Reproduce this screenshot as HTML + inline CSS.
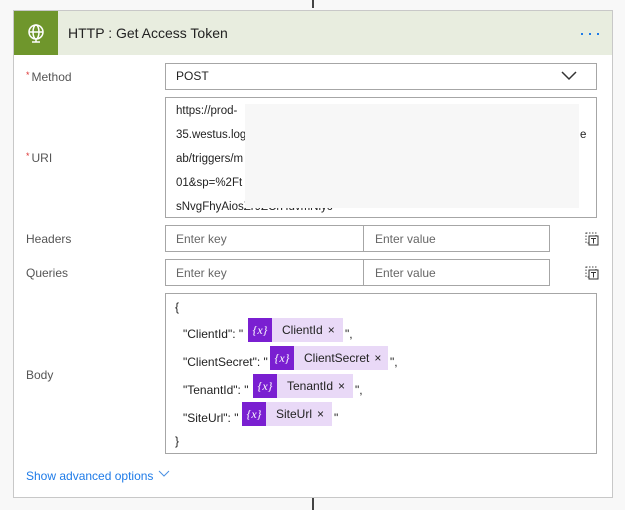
<!DOCTYPE html>
<html><head><style>
*{box-sizing:border-box;margin:0;padding:0}
body{width:625px;height:510px;background:#f8f8f8;font-family:"Liberation Sans",sans-serif;position:relative;overflow:hidden;font-size:12px;color:#222}
.a{position:absolute}
.card{left:13px;top:10px;width:600px;height:488px;background:#fff;border:1px solid #c8c8c8}
.hdr{left:14px;top:11px;width:598px;height:44px;background:#e8eddf}
.ico{left:14px;top:11px;width:44px;height:44px;background:#6f962c}
.lbl{color:#555;font-size:12px}
.st{color:#d33;font-size:9px;vertical-align:top;margin-right:2px}
.box{border:1px solid #a6a6a6;background:#fff}
.ph{color:#666;font-size:12px}
.ln{font-size:11.5px;color:#222;left:176px}
.chip{position:absolute;height:24px;background:#e9d9f7;font-size:12px;color:#222;line-height:24px;white-space:nowrap}
.chip b{display:inline-block;width:24px;height:24px;background:#7a1fd1;color:#fff;font-weight:normal;font-family:"Liberation Serif",serif;font-style:italic;text-align:center;font-size:12px;vertical-align:top;margin-right:10px}
.chip i{font-style:normal;margin-left:5px}
.j{position:absolute;left:176px;font-size:12px;color:#222}
</style></head><body>
<div class="a" style="left:312px;top:0;width:2px;height:8px;background:#444"></div>
<div class="a" style="left:312px;top:498px;width:2px;height:12px;background:#444"></div>
<div class="a card"></div>
<div class="a hdr"></div>
<div class="a ico"><svg width="44" height="44" viewBox="0 0 44 44"><g fill="none" stroke="#fff" stroke-width="1.5"><circle cx="22" cy="21" r="7"/><ellipse cx="22" cy="21" rx="3" ry="7"/><line x1="15" y1="21" x2="29" y2="21"/><line x1="22" y1="28" x2="22" y2="31"/><line x1="18" y1="31" x2="26" y2="31"/></g></svg></div>
<div class="a" style="left:68px;top:25px;font-size:14px;color:#222">HTTP : Get Access Token</div>
<div class="a" style="left:581px;top:33px;width:2px;height:2px;background:#1e7be8"></div>
<div class="a" style="left:589px;top:33px;width:2px;height:2px;background:#1e7be8"></div>
<div class="a" style="left:597px;top:33px;width:2px;height:2px;background:#1e7be8"></div>

<div class="a lbl" style="left:26px;top:70px"><span class="st">*</span>Method</div>
<div class="a box" style="left:165px;top:63px;width:432px;height:27px"></div>
<div class="a" style="left:176px;top:69px;font-size:12px">POST</div>
<svg class="a" style="left:561px;top:71px" width="16" height="10"><path d="M1 1 L8 8 L15 1" fill="none" stroke="#333" stroke-width="1.5"/></svg>

<div class="a lbl" style="left:26px;top:151px"><span class="st">*</span>URI</div>
<div class="a box" style="left:165px;top:97px;width:432px;height:121px"></div>
<div class="a ln" style="top:105px">https://prod-</div>
<div class="a ln" style="top:129px">35.westus.log</div>
<div class="a ln" style="top:153px">ab/triggers/m</div>
<div class="a ln" style="top:177px">01&amp;sp=%2Ft</div>
<div class="a ln" style="top:201px">sNvgFhyAiosZr9ZCrHuvmNiyc</div>
<div class="a" style="left:245px;top:104px;width:334px;height:104px;background:#f7f7f7"></div>
<div class="a ln" style="left:580px;top:129px">e</div>

<div class="a lbl" style="left:26px;top:232px">Headers</div>
<div class="a box" style="left:165px;top:225px;width:385px;height:27px"></div>
<div class="a" style="left:363px;top:225px;width:1px;height:27px;background:#a6a6a6"></div>
<div class="a ph" style="left:176px;top:232px">Enter key</div>
<div class="a ph" style="left:375px;top:232px">Enter value</div>
<div class="a lbl" style="left:26px;top:266px">Queries</div>
<div class="a box" style="left:165px;top:259px;width:385px;height:27px"></div>
<div class="a" style="left:363px;top:259px;width:1px;height:27px;background:#a6a6a6"></div>
<div class="a ph" style="left:176px;top:266px">Enter key</div>
<div class="a ph" style="left:375px;top:266px">Enter value</div>
<svg class="a" style="left:585px;top:232px" width="14" height="14"><rect x="1" y="1" width="10" height="10" fill="none" stroke="#444" stroke-dasharray="1.5 1.5"/><rect x="4" y="4" width="9" height="9" fill="#fff" stroke="#333"/><path d="M6 6.5h5M8.5 6.5v5" stroke="#333"/></svg>
<svg class="a" style="left:585px;top:266px" width="14" height="14"><rect x="1" y="1" width="10" height="10" fill="none" stroke="#444" stroke-dasharray="1.5 1.5"/><rect x="4" y="4" width="9" height="9" fill="#fff" stroke="#333"/><path d="M6 6.5h5M8.5 6.5v5" stroke="#333"/></svg>

<div class="a lbl" style="left:26px;top:368px">Body</div>
<div class="a box" style="left:165px;top:293px;width:432px;height:161px"></div>
<div class="j" style="left:175px;top:300px">{</div>
<div class="j" style="left:183px;top:327px">"ClientId": "</div>
<div class="chip" style="left:248px;top:318px;width:95px"><b>{x}</b>ClientId<i>&#215;</i></div>
<div class="j" style="left:345px;top:327px">",</div>
<div class="j" style="left:183px;top:355px">"ClientSecret": "</div>
<div class="chip" style="left:270px;top:346px;width:118px"><b>{x}</b>ClientSecret<i>&#215;</i></div>
<div class="j" style="left:390px;top:355px">",</div>
<div class="j" style="left:183px;top:383px">"TenantId": "</div>
<div class="chip" style="left:253px;top:374px;width:100px"><b>{x}</b>TenantId<i>&#215;</i></div>
<div class="j" style="left:355px;top:383px">",</div>
<div class="j" style="left:183px;top:411px">"SiteUrl": "</div>
<div class="chip" style="left:242px;top:402px;width:90px"><b>{x}</b>SiteUrl<i>&#215;</i></div>
<div class="j" style="left:334px;top:411px">"</div>
<div class="j" style="left:175px;top:434px">}</div>

<div class="a" style="left:26px;top:469px;color:#1e7be8;font-size:12px">Show advanced options</div>
<svg class="a" style="left:158px;top:470px" width="12" height="8"><path d="M1 1 L6 6 L11 1" fill="none" stroke="#4a90e2"/></svg>
</body></html>
